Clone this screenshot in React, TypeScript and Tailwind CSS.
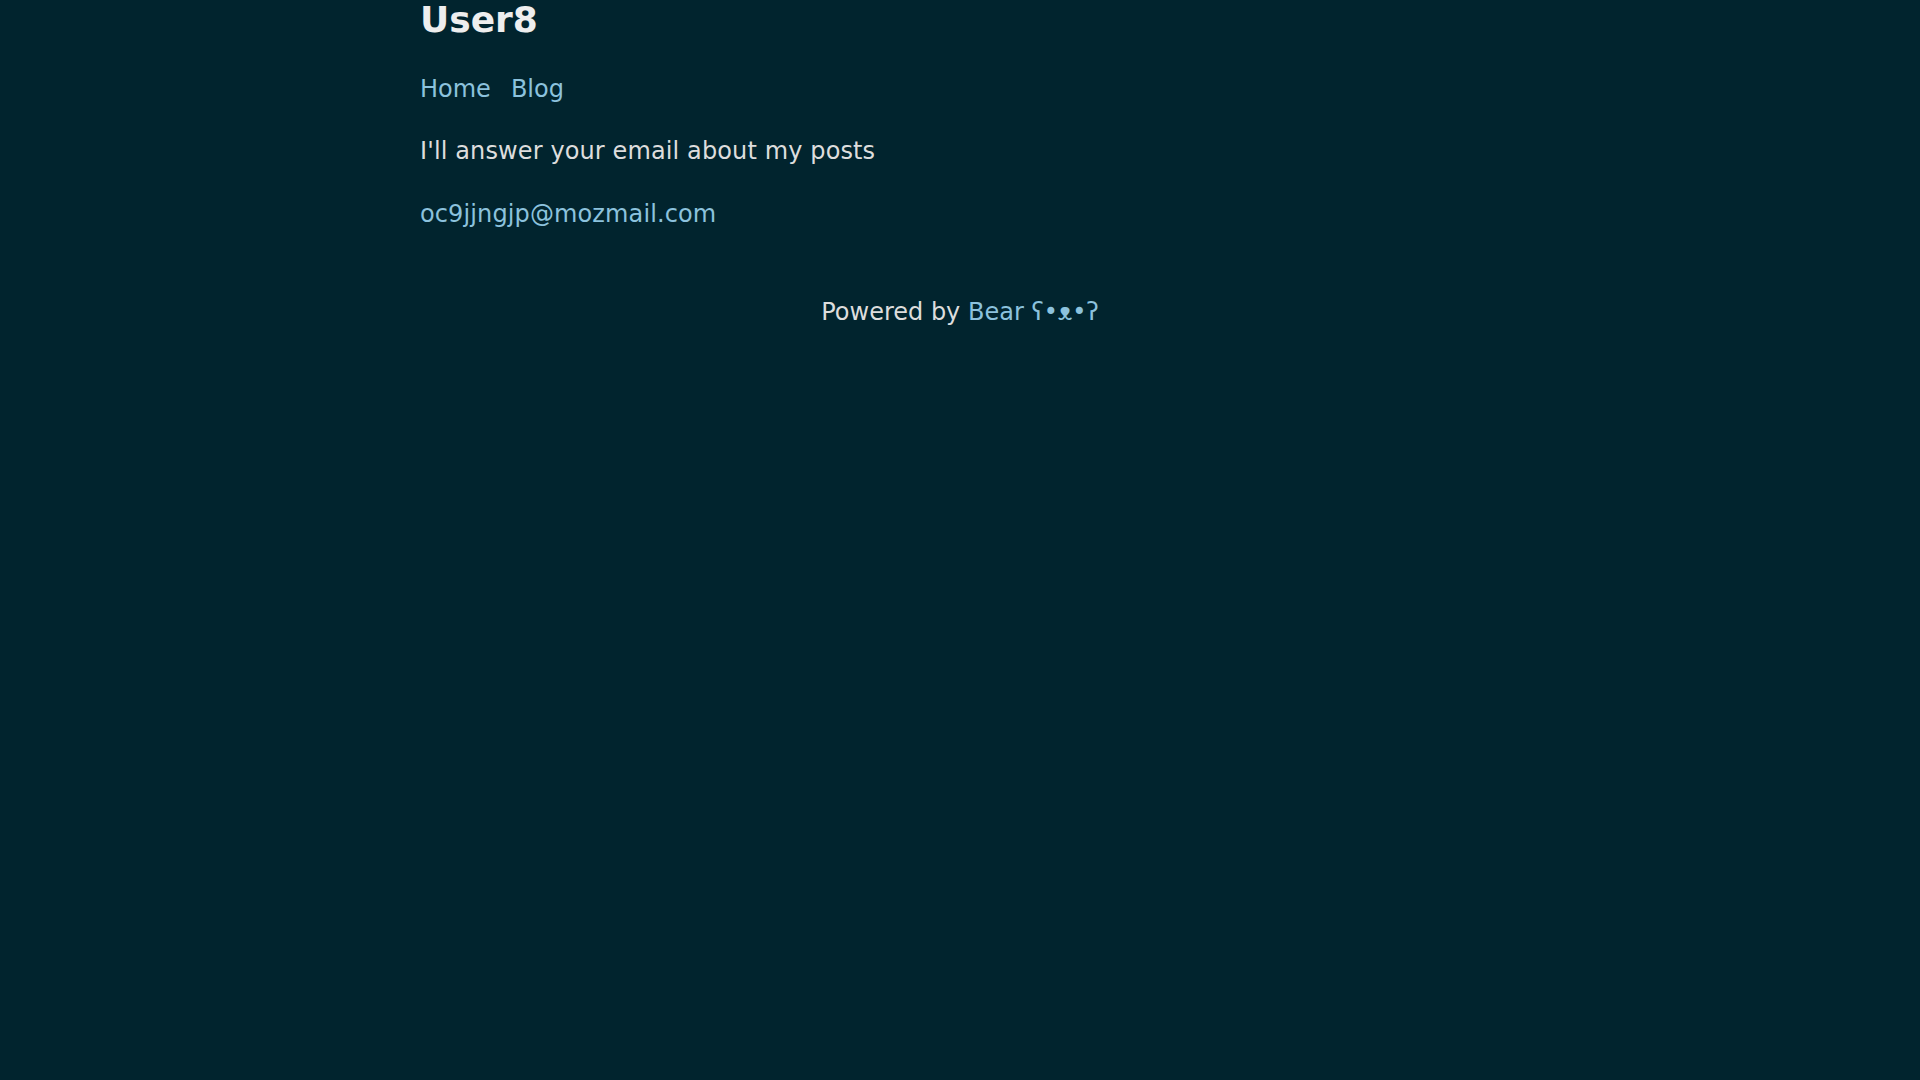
export default function App() {
  return (
    <div className="min-h-screen bg-[#01242e] text-[#dddddd] font-['DejaVu_Sans',Verdana,sans-serif]">
      <div className="w-[1080px] mx-auto">
        <header>
          <a href="#" className="block">
            <h1 className="text-[36px] leading-[40px] font-bold text-[#eeeeee]">User8</h1>
          </a>
          <nav className="mt-[31px] flex gap-[20px] text-[24px] leading-[36px]">
            <a href="#" className="text-[#8cc2dd]">Home</a>
            <a href="#" className="text-[#8cc2dd]">Blog</a>
          </nav>
        </header>
        <main className="text-[24px] leading-[36px] tracking-[0.12px]">
          <p className="mt-[26px]">I'll answer your email about my posts</p>
          <p className="mt-[27px]">
            <a href="#" className="text-[#8cc2dd]">oc9jjngjp@mozmail.com</a>
          </p>
        </main>
        <footer className="mt-[62px] text-center text-[24px] leading-[36px]">
          Powered by <a href="#" className="text-[#8cc2dd]">Bear ʕ•ᴥ•ʔ</a>
        </footer>
      </div>
    </div>
  );
}
